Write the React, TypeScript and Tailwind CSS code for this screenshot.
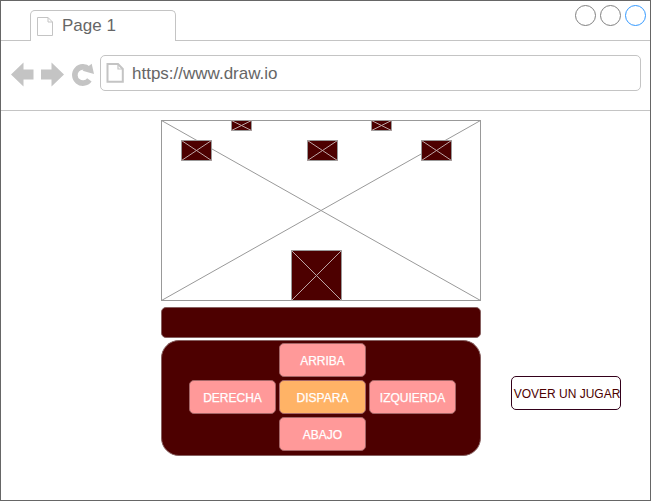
import React from "react";

function PageIcon({ className, stroke }: { className: string; stroke: number }) {
  return (
    <svg className={className} viewBox="0 0 18 20" fill="none" stroke="#c4c4c4" strokeWidth={stroke}>
      <path d="M1.5 1H12L16.8 6V18.7H1.5Z" />
      <path d="M12 1V6H16.5" strokeWidth="1.2" />
    </svg>
  );
}

function CrossBox({ w, h, fill, className }: { w: number; h: number; fill: string; className: string }) {
  return (
    <svg className={className} width={w} height={h} viewBox={`0 0 ${w} ${h}`} fill="none" stroke="#999999">
      <rect x="0.5" y="0.5" width={w - 1} height={h - 1} fill={fill} />
      <path d={`M0.5 0.5L${w - 0.5} ${h - 0.5}M${w - 0.5} 0.5L0.5 ${h - 0.5}`} stroke={fill === "none" ? "#999999" : "#bda5a5"} />
    </svg>
  );
}

function PadButton({ label, className }: { label: string; className: string }) {
  return (
    <button
      className={`flex h-[34px] w-[87px] items-center justify-center rounded-[5px] border border-[#a46566] pt-0.5 text-xs leading-none text-white [-webkit-text-stroke:0.25px_white] ${className}`}
    >
      {label}
    </button>
  );
}

export default function App() {
  return (
    <div className="flex h-[501px] w-[651px] flex-col overflow-hidden border border-[#666666] bg-white font-['Liberation_Sans',Arial,sans-serif]">
      <header className="flex h-10 shrink-0">
        <div className="w-[29px] border-b border-[#c4c4c4]" />
        <div className="mt-[9px] flex w-[146px] rounded-t-[5px] border border-b-0 border-[#c4c4c4] pl-1.5 pt-[5px]">
          <svg className="h-[20px] w-[17px]" viewBox="0 0 17 20" fill="none" stroke="#c4c4c4">
            <path d="M0.5 1.5H11L15.5 6V19.5H0.5Z" />
            <path d="M11 1.5V6H15.5" />
          </svg>
          <span className="ml-2 mt-px text-[17px] leading-[18px] text-[#666666]">Page 1</span>
        </div>
        <div className="flex flex-1 justify-end gap-1 border-b border-[#c4c4c4] pr-1 pt-1">
          <span className="size-[21px] rounded-full border border-[#808080]" />
          <span className="size-[21px] rounded-full border border-[#808080]" />
          <span className="size-[21px] rounded-full border border-[#3399ff]" />
        </div>
      </header>

      <nav className="flex h-[70px] shrink-0 border-b border-[#c4c4c4] pl-2.5">
        <svg className="mt-[21px] h-[26px] w-[84px]" viewBox="11 62 84 26" fill="#c4c4c4">
          <path d="M11 74.5L23.5 62.5V69.5H33.5V79.5H23.5V86.5Z" />
          <path d="M64 74.5L51.5 62.5V69.5H41V79.5H51.5V86.5Z" />
          <path d="M88.6 69.2A8.1 8.1 0 1 0 89.4 79.9" fill="none" stroke="#c4c4c4" strokeWidth="5.6" />
          <path d="M91.7 63.7L94 74L82.5 70.8Z" />
        </svg>
        <div className="ml-[5px] mt-3.5 flex h-9 w-[541px] items-center rounded-[5px] border border-[#c4c4c4] pl-[5px]">
          <PageIcon className="h-5 w-[18px]" stroke={2} />
          <span className="ml-2 text-[17px] leading-none text-[#666666]">https://www.draw.io</span>
        </div>
      </nav>

      <main className="flex flex-1 pl-40 pt-[9px]">
        <div className="w-80">
          <div className="relative h-[181px] w-80">
            <CrossBox w={320} h={181} fill="none" className="block" />
            <CrossBox w={31} h={21} fill="#4d0000" className="absolute left-5 top-5" />
            <CrossBox w={21} h={11} fill="#4d0000" className="absolute left-[70px] top-0" />
            <CrossBox w={31} h={21} fill="#4d0000" className="absolute left-[146px] top-5" />
            <CrossBox w={21} h={11} fill="#4d0000" className="absolute left-[210px] top-0" />
            <CrossBox w={31} h={21} fill="#4d0000" className="absolute left-[260px] top-5" />
            <CrossBox w={51} h={51} fill="#4d0000" className="absolute left-[130px] top-[130px]" />
          </div>
          <div className="mt-1.5 h-[31px] rounded-[5px] border border-[#876060] bg-[#4d0000]" />
          <div className="mt-0.5 flex h-[116px] flex-col items-center gap-[3px] rounded-[18px] border border-[#876060] bg-[#4d0000] pt-0.5">
            <PadButton label="ARRIBA" className="ml-[3px] bg-[#ff9999]" />
            <div className="ml-[3px] flex gap-[3px]">
              <PadButton label="DERECHA" className="bg-[#ff9999]" />
              <PadButton label="DISPARA" className="bg-[#ffb366]" />
              <PadButton label="IZQUIERDA" className="bg-[#ff9999]" />
            </div>
            <PadButton label="ABAJO" className="ml-[3px] bg-[#ff9999]" />
          </div>
        </div>
        <button className="ml-[30px] mt-[256px] flex h-[34px] w-[110px] items-center justify-center whitespace-nowrap rounded-[5px] border border-[#33001a] pl-0.5 pt-0.5 text-xs leading-none text-[#4d0000]">
          VOVER UN JUGAR
        </button>
      </main>
    </div>
  );
}
